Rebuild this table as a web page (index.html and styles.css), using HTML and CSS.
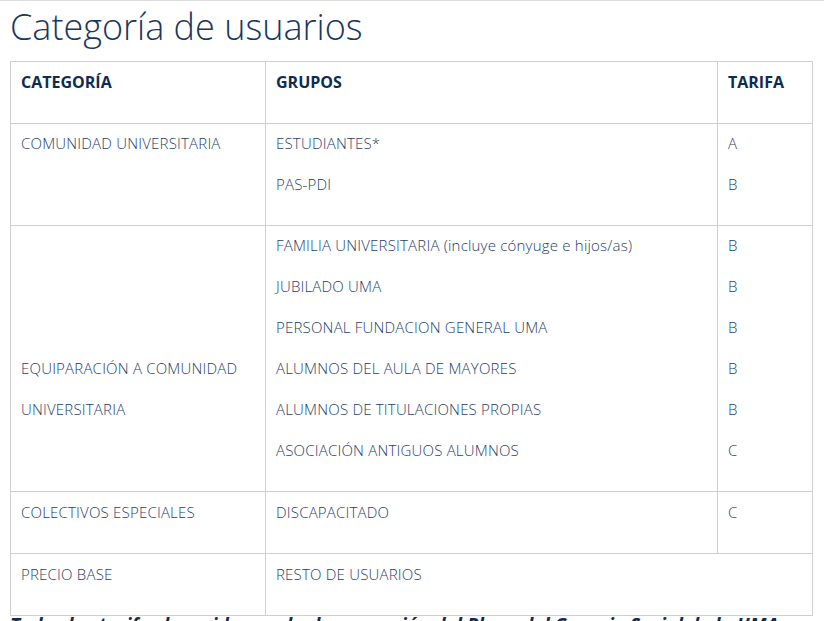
FILE: index.html
```html
<!DOCTYPE html>
<html lang="es">
<head>
<meta charset="utf-8">
<title>Categoría de usuarios</title>
<link rel="stylesheet" href="styles.css">
</head>
<body>
<div class="page">
  <h1 class="title">Categoría de usuarios</h1>
  <table class="tarifas">
    <colgroup>
      <col class="c1">
      <col class="c2">
      <col class="c3">
    </colgroup>
    <thead>
      <tr>
        <th>CATEGORÍA</th>
        <th>GRUPOS</th>
        <th>TARIFA</th>
      </tr>
    </thead>
    <tbody>
      <tr>
        <td><p>COMUNIDAD UNIVERSITARIA</p></td>
        <td><p>ESTUDIANTES*</p><p>PAS-PDI</p></td>
        <td><p>A</p><p>B</p></td>
      </tr>
      <tr>
        <td><p>&nbsp;</p><p>&nbsp;</p><p>&nbsp;</p><p>EQUIPARACIÓN A COMUNIDAD</p><p>UNIVERSITARIA</p></td>
        <td>
          <p>FAMILIA UNIVERSITARIA (incluye cónyuge e hijos/as)</p>
          <p>JUBILADO UMA</p>
          <p>PERSONAL FUNDACION GENERAL UMA</p>
          <p>ALUMNOS DEL AULA DE MAYORES</p>
          <p>ALUMNOS DE TITULACIONES PROPIAS</p>
          <p>ASOCIACIÓN ANTIGUOS ALUMNOS</p>
        </td>
        <td><p>B</p><p>B</p><p>B</p><p>B</p><p>B</p><p>C</p></td>
      </tr>
      <tr class="single">
        <td><p>COLECTIVOS ESPECIALES</p></td>
        <td><p>DISCAPACITADO</p></td>
        <td><p>C</p></td>
      </tr>
      <tr class="single">
        <td><p>PRECIO BASE</p></td>
        <td colspan="2"><p>RESTO DE USUARIOS</p></td>
      </tr>
    </tbody>
  </table>
  <p class="note">Todas las tarifas han sido aprobadas en sesión del Pleno del Consejo Social de la UMA</p>
</div>
</body>
</html>
```

FILE: styles.css
```css
html, body {
  margin: 0;
  padding: 0;
  background: #ffffff;
}

body {
  font-family: "Open Sans", "Liberation Sans", sans-serif;
  color: #1b3a63;
  overflow: hidden;
}

.page {
  border-top: 1px solid #dcdcdc;
  padding: 6px 10px 0 10px;
}

.title {
  margin: 0 0 14px 0;
  font-size: 36px;
  font-weight: 300;
  line-height: 40px;
  color: #17375e;
}

.tarifas {
  border-collapse: collapse;
  width: 802px;
  table-layout: fixed;
}

.tarifas col.c1 { width: 255px; }
.tarifas col.c2 { width: 452px; }
.tarifas col.c3 { width: 95px; }

.tarifas th,
.tarifas td {
  border: 1px solid #cfcfcf;
  padding: 9px 10px 10px 10px;
  vertical-align: top;
  text-align: left;
}

.tarifas th {
  font-size: 16px;
  font-weight: 700;
  line-height: 21px;
  color: #0e2c52;
  padding-top: 10px;
  padding-bottom: 30px;
}

.tarifas td {
  font-size: 15px;
  font-weight: 350;
  line-height: 21px;
  letter-spacing: 0.2px;
  color: #1f3e69;
}

.tarifas .single td {
  padding-top: 10px;
}

.tarifas td p {
  margin: 0 0 20px 0;
}

.note {
  margin: 0;
  font-size: 19px;
  font-weight: 700;
  font-style: italic;
  line-height: 19px;
  color: #0e2c52;
  white-space: nowrap;
}
```
